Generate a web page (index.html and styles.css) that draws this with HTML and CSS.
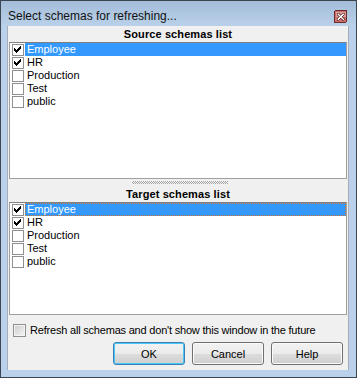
FILE: index.html
```html
<!DOCTYPE html>
<html lang="en">
  <head>
    <meta charset="UTF-8" />
    <title>Select schemas for refreshing...</title>
    <link rel="stylesheet" href="styles.css">
  </head>
  <body>
    <div class="window">
      <div class="titlebar">
        <span class="title">Select schemas for refreshing...</span>
        <span class="close">
          <svg width="13" height="13" viewBox="0 0 13 13" shape-rendering="crispEdges">
            <rect x="0.5" y="0.5" width="12" height="12" rx="1.5" fill="#c9706c" stroke="#6e2b28"/>
            <rect x="1.5" y="1.5" width="10" height="5" fill="#dc9c98"/>
            <path d="M3 3h2v1h1v1h1v-1h1v-1h2v2h-1v1h-1v1h1v1h1v2h-2v-1h-1v-1h-1v1h-1v1h-2v-2h1v-1h1v-1h-1v-1h-1z" fill="#fff" stroke="#5a2b2a" stroke-width="0.6"/>
          </svg>
        </span>
      </div>

      <div class="client">
        <div class="pane-head">Source schemas list</div>
        <ul class="list list-source">
          <li class="item"><span class="cb"><svg width="10" height="10" viewBox="0 0 10 10" shape-rendering="crispEdges"><path d="M1 3h1v3h-1zM2 4h1v3h-1zM3 5h1v3h-1zM4 4h1v3h-1zM5 3h1v3h-1zM6 2h1v3h-1zM7 1h1v3h-1z" fill="#000"/></svg></span><span class="name selected">Employee</span></li>
          <li class="item"><span class="cb"><svg width="10" height="10" viewBox="0 0 10 10" shape-rendering="crispEdges"><path d="M1 3h1v3h-1zM2 4h1v3h-1zM3 5h1v3h-1zM4 4h1v3h-1zM5 3h1v3h-1zM6 2h1v3h-1zM7 1h1v3h-1z" fill="#000"/></svg></span><span class="name">HR</span></li>
          <li class="item"><span class="cb"></span><span class="name">Production</span></li>
          <li class="item"><span class="cb"></span><span class="name">Test</span></li>
          <li class="item"><span class="cb"></span><span class="name">public</span></li>
        </ul>

        <div class="splitter"><span class="grip"></span></div>

        <div class="pane-head pane-head-target">Target schemas list</div>
        <ul class="list list-target">
          <li class="item"><span class="cb"><svg width="10" height="10" viewBox="0 0 10 10" shape-rendering="crispEdges"><path d="M1 3h1v3h-1zM2 4h1v3h-1zM3 5h1v3h-1zM4 4h1v3h-1zM5 3h1v3h-1zM6 2h1v3h-1zM7 1h1v3h-1z" fill="#000"/></svg></span><span class="name selected focused">Employee</span></li>
          <li class="item"><span class="cb"><svg width="10" height="10" viewBox="0 0 10 10" shape-rendering="crispEdges"><path d="M1 3h1v3h-1zM2 4h1v3h-1zM3 5h1v3h-1zM4 4h1v3h-1zM5 3h1v3h-1zM6 2h1v3h-1zM7 1h1v3h-1z" fill="#000"/></svg></span><span class="name">HR</span></li>
          <li class="item"><span class="cb"></span><span class="name">Production</span></li>
          <li class="item"><span class="cb"></span><span class="name">Test</span></li>
          <li class="item"><span class="cb"></span><span class="name">public</span></li>
        </ul>

        <label class="option">
          <span class="option-box"></span>
          <span class="option-text">Refresh all schemas and don't show this window in the future</span>
        </label>

        <div class="buttons">
          <button class="btn btn-default">OK</button>
          <button class="btn">Cancel</button>
          <button class="btn">Help</button>
        </div>
      </div>
    </div>
  </body>
</html>
```

FILE: styles.css
```css
* {
  box-sizing: border-box;
  margin: 0;
  padding: 0;
}

body {
  font-family: "Liberation Sans", Arial, sans-serif;
  font-size: 11px;
  color: #000;
  background: #fff;
}

.window {
  width: 357px;
  height: 378px;
  border: 1px solid #3d4650;
  background: #b9d1ea;
  display: flex;
  flex-direction: column;
}

.titlebar {
  height: 25px;
  flex: 0 0 25px;
  display: flex;
  align-items: flex-start;
  justify-content: space-between;
  padding: 9px 9px 0 7px;
  background: linear-gradient(#a3bcd8, #bad1e9);
}

.title {
  font-size: 12px;
  line-height: 15px;
  margin-top: -1px;
  color: #111;
}

.close {
  display: block;
  width: 13px;
  height: 13px;
}

.close svg {
  display: block;
}

.client {
  flex: 0 0 344px;
  margin: 0 7px 0 6px;
  background: #f0f0f0;
  border-left: 1px solid #a4adb8;
  border-right: 1px solid #a4adb8;
  display: flex;
  flex-direction: column;
}

.pane-head {
  height: 16px;
  line-height: 16px;
  text-align: center;
  font-weight: bold;
  font-size: 11px;
  letter-spacing: 0.1px;
}

.pane-head-target {
  height: 15px;
  line-height: 15px;
}

.list {
  list-style: none;
  margin: 0 1px;
  background: #fff;
  border: 1px solid #a0a0a0;
  border-top-color: #808080;
}

.list-source {
  height: 137px;
}

.list-target {
  height: 113px;
}

.item {
  display: flex;
  height: 13px;
}

.cb {
  width: 12px;
  height: 12px;
  margin: 1px 0 0 2px;
  border: 1px solid #8e8f8f;
  background: #fff;
}

.cb svg {
  display: block;
}

.name {
  margin-left: 1px;
  padding-left: 2px;
  line-height: 13px;
  flex: 1;
}

.selected {
  background: #3399ff;
  color: #fff;
}

.focused {
  outline: 1px dotted #d0762e;
  outline-offset: -1px;
}

.splitter {
  height: 8px;
  display: flex;
  justify-content: center;
  padding-top: 2px;
}

.grip {
  width: 96px;
  height: 3px;
  margin-left: 3px;
  background-image: conic-gradient(#a8a8a8 25%, transparent 0 50%, #a8a8a8 0 75%, transparent 0);
  background-size: 2px 2px;
}

.option {
  display: flex;
  align-items: center;
  margin: 9px 0 0 5px;
  height: 13px;
}

.option-box {
  width: 13px;
  height: 13px;
  border: 1px solid #8e8f8f;
  background: linear-gradient(135deg, #cbcbcb, #f7f7f7);
  box-shadow: inset 0 0 0 1px #f4f4f4;
}

.option-text {
  margin-left: 4px;
  line-height: 13px;
  letter-spacing: -0.2px;
}

.buttons {
  display: flex;
  justify-content: flex-end;
  gap: 7px;
  margin-top: 5px;
  padding-right: 5px;
}

.btn {
  width: 72px;
  height: 23px;
  font-family: "Liberation Sans", Arial, sans-serif;
  font-size: 11px;
  color: #000;
  border: 1px solid #707070;
  border-radius: 3px;
  background: linear-gradient(#f2f2f2 0%, #ebebeb 50%, #dddddd 51%, #cfcfcf 100%);
  box-shadow: inset 0 0 0 1px #fbfbfb;
}

.btn-default {
  border-color: #3c7fb1;
  box-shadow: inset 0 0 0 1px #48c8f8;
}
```
